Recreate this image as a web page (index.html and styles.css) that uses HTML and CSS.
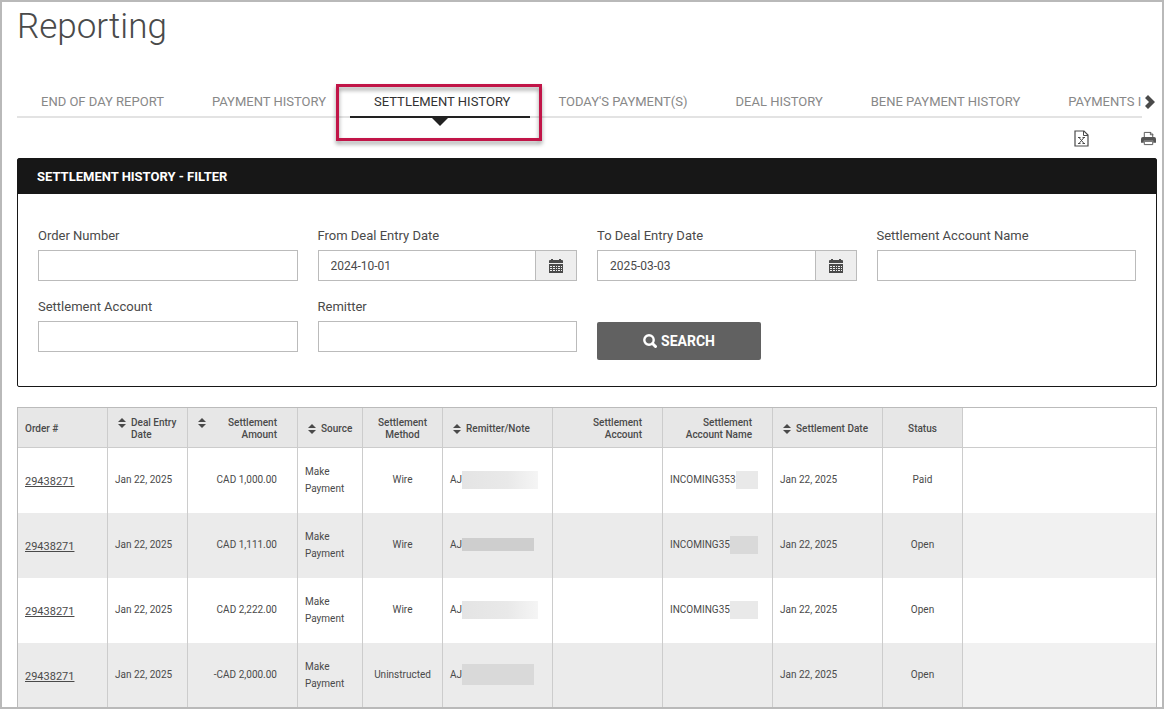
FILE: index.html
```html
<!DOCTYPE html>
<html lang="en">
<head>
<meta charset="UTF-8" />
<meta name="viewport" content="width=device-width, initial-scale=1" />
<title>Reporting - Settlement History</title>
<link rel="stylesheet" href="styles.css">
</head>
<body>

<!-- Shared icons -->
<svg class="sprite" aria-hidden="true">
  <symbol id="icon-sort" viewBox="0 0 8 10">
    <path d="M0 4 4 0l4 4zM0 6h8l-4 4z" />
  </symbol>
  <symbol id="icon-calendar" viewBox="0 0 14 14">
    <path fill-rule="evenodd" d="M0 4V2q0-1 1-1h1V0h2v1h6V0h2v1h1q1 0 1 1v2zM0 5h14v9H0zM1 7v1h2V7zM4 7v1h2V7zM7 7v1h1V7zM9 7v1h2V7zM12 7v1h1V7zM1 9v1h2V9zM4 9v1h2V9zM7 9v1h1V9zM9 9v1h2V9zM12 9v1h1V9zM1 11v1h2v-1zM4 11v1h2v-1zM7 11v1h1v-1zM9 11v1h2v-1zM12 11v1h1v-1z" />
  </symbol>
</svg>

<div class="page">
  <h1>Reporting</h1>

  <div class="tabs">
    <nav class="tab-list">
      <a href="#end-of-day">END OF DAY REPORT</a>
      <a href="#payment">PAYMENT HISTORY</a>
      <a href="#settlement" class="active" aria-current="page">SETTLEMENT HISTORY</a>
      <a href="#today">TODAY'S PAYMENT(S)</a>
      <a href="#deal">DEAL HISTORY</a>
      <a href="#bene">BENE PAYMENT HISTORY</a>
      <a href="#payments-in">PAYMENTS I</a>
    </nav>
    <button type="button" class="tab-next" aria-label="More reports">
      <svg width="10" height="14" viewBox="0 0 10 14"><path d="M0 3 3 0l7 7-7 7-3-3 4-4z" /></svg>
    </button>
  </div>

  <div class="toolbar">
    <button type="button" aria-label="Export to Excel">
      <svg class="outline" width="15" height="17" viewBox="0 0 15 17">
        <path d="M1 1h9l4 4v11H1z" stroke-width="1.2" />
        <path d="M9.5 1v4.500H14" />
        <path d="M5 7.500 10 13.500M10 7.500 5 13.500M4 7.500h2.500M8.500 7.500H11M4 13.500h2.500M8.500 13.500H11" />
      </svg>
    </button>
    <button type="button" aria-label="Print">
      <svg width="15" height="15" viewBox="0 0 16 15">
        <path d="M3.500 8V1h7l2 2v5" fill="#fff" stroke="#555" />
        <path d="M10 1v2.500h3" fill="none" stroke="#555" />
        <path d="M2 6h12q2 0 2 2v4h-3v-2H3v2H0V8q0-2 2-2z" fill="#555" />
        <path d="M3.500 10.500h9v3.500h-9z" fill="#fff" stroke="#555" />
      </svg>
    </button>
  </div>

  <form class="filter">
    <h2>SETTLEMENT HISTORY - FILTER</h2>
    <div class="fields">
      <div class="field">
        <label for="orderNumber">Order Number</label>
        <input id="orderNumber" type="text" />
      </div>
      <div class="field">
        <label for="fromDate">From Deal Entry Date</label>
        <div class="date-group">
          <input id="fromDate" type="text" value="2024-10-01" />
          <button type="button" aria-label="Pick from date"><svg width="14" height="14"><use href="#icon-calendar" /></svg></button>
        </div>
      </div>
      <div class="field">
        <label for="toDate">To Deal Entry Date</label>
        <div class="date-group">
          <input id="toDate" type="text" value="2025-03-03" />
          <button type="button" aria-label="Pick to date"><svg width="14" height="14"><use href="#icon-calendar" /></svg></button>
        </div>
      </div>
      <div class="field">
        <label for="accountName">Settlement Account Name</label>
        <input id="accountName" type="text" />
      </div>
      <div class="field">
        <label for="account">Settlement Account</label>
        <input id="account" type="text" />
      </div>
      <div class="field">
        <label for="remitter">Remitter</label>
        <input id="remitter" type="text" />
      </div>
      <button type="submit" class="search">
        <svg class="outline" width="14" height="14" viewBox="0 0 14 14">
          <circle cx="6" cy="6" r="4.700" stroke-width="2.400" />
          <path d="m9.500 9.500 3 3" stroke-width="3" stroke-linecap="round" />
        </svg>
        SEARCH
      </button>
    </div>
  </form>

  <table class="results">
    <colgroup>
      <col class="w90"><col class="w80"><col class="w110"><col class="w65"><col class="w80">
      <col class="w110"><col class="w110"><col class="w110"><col class="w110"><col class="w80"><col>
    </colgroup>
    <thead>
      <tr>
        <th>Order #</th>
        <th><button type="button" class="sort"><svg><use href="#icon-sort" /></svg><span>Deal Entry Date</span></button></th>
        <th class="right"><button type="button" class="sort"><svg><use href="#icon-sort" /></svg><span>Settlement Amount</span></button></th>
        <th><button type="button" class="sort"><svg><use href="#icon-sort" /></svg><span>Source</span></button></th>
        <th class="center">Settlement Method</th>
        <th><button type="button" class="sort"><svg><use href="#icon-sort" /></svg><span>Remitter/Note</span></button></th>
        <th class="right">Settlement<br>Account</th>
        <th class="right">Settlement<br>Account Name</th>
        <th><button type="button" class="sort"><svg><use href="#icon-sort" /></svg><span>Settlement Date</span></button></th>
        <th class="center">Status</th>
        <td class="filler"></td>
      </tr>
    </thead>
    <tbody>
      <tr>
        <td><a href="#order">29438271</a></td>
        <td>Jan 22, 2025</td>
        <td class="right">CAD 1,000.00</td>
        <td>Make Payment</td>
        <td class="center">Wire</td>
        <td><div class="masked note"><span>AJ</span><i class="mask fade"></i></div></td>
        <td></td>
        <td><div class="masked"><span>INCOMING353</span><i class="mask light short"></i></div></td>
        <td>Jan 22, 2025</td>
        <td class="center">Paid</td>
        <td class="filler"></td>
      </tr>
      <tr>
        <td><a href="#order">29438271</a></td>
        <td>Jan 22, 2025</td>
        <td class="right">CAD 1,111.00</td>
        <td>Make Payment</td>
        <td class="center">Wire</td>
        <td><div class="masked note"><span>AJ</span><i class="mask thin"></i></div></td>
        <td></td>
        <td><div class="masked"><span>INCOMING35</span><i class="mask long"></i></div></td>
        <td>Jan 22, 2025</td>
        <td class="center">Open</td>
        <td class="filler"></td>
      </tr>
      <tr>
        <td><a href="#order">29438271</a></td>
        <td>Jan 22, 2025</td>
        <td class="right">CAD 2,222.00</td>
        <td>Make Payment</td>
        <td class="center">Wire</td>
        <td><div class="masked note"><span>AJ</span><i class="mask fade"></i></div></td>
        <td></td>
        <td><div class="masked"><span>INCOMING35</span><i class="mask light long"></i></div></td>
        <td>Jan 22, 2025</td>
        <td class="center">Open</td>
        <td class="filler"></td>
      </tr>
      <tr>
        <td><a href="#order">29438271</a></td>
        <td>Jan 22, 2025</td>
        <td class="right">-CAD 2,000.00</td>
        <td>Make Payment</td>
        <td class="center">Uninstructed</td>
        <td><div class="masked note"><span>AJ</span><i class="mask tall"></i></div></td>
        <td></td>
        <td></td>
        <td>Jan 22, 2025</td>
        <td class="center">Open</td>
        <td class="filler"></td>
      </tr>
    </tbody>
  </table>
</div>

</body>
</html>
```
FILE: styles.css
```css
* {
  box-sizing: border-box;
}
body {
  font-family: Roboto, "Open Sans", sans-serif;
  background: #fff;
  color: #4a4a4a;
  margin: 0;
}
button, input {
  font-family: inherit;
  color: inherit;
}
button {
  padding: 0;
  border: none;
  background: none;
  cursor: pointer;
}
svg {
  display: block;
  fill: currentColor;
}
.outline {
  fill: none;
  stroke: currentColor;
}
.sprite {
  display: none;
}
.page {
  height: 100vh;
  overflow: hidden;
  border: 2px solid #b9b9b9;
  padding: 0 5px 0 15px;
}
h1 {
  margin: 0;
  font-size: 35px;
  line-height: 50px;
  font-weight: 300;
}

/* Tabs */
.tabs {
  display: flex;
  align-items: center;
  gap: 3px;
  margin-top: 34px;
}
.tab-list {
  flex: 1;
  min-width: 0;
  display: flex;
  gap: 4px;
  overflow-x: clip;
  box-shadow: inset 0 -2px #e3e3e3;
}
.tab-list a {
  position: relative;
  padding: 0 20px 0 24px;
  font-size: 13px;
  line-height: 32px;
  color: #888;
  text-decoration: none;
  white-space: nowrap;
}
.tab-list a:last-child {
  padding-right: 0;
}
.tab-list .active {
  color: #333;
  box-shadow: inset 0 -2px #222;
}
.tab-list .active::after {
  content: "";
  position: absolute;
  top: 100%;
  left: 50%;
  margin-left: -8px;
  border: 8px solid transparent;
  border-top-color: #222;
  border-bottom: none;
}
/* Highlight box round the current tab */
.tab-list .active::before {
  content: "";
  position: absolute;
  inset: -2px -12px -23px -14px;
  border: 3px solid #c11548;
  filter: drop-shadow(0 3px 2px rgba(0,0,0,0.4));
}
.tab-next {
  width: 12px;
}
.toolbar {
  display: flex;
  justify-content: flex-end;
  align-items: center;
  gap: 52px;
  height: 40px;
  padding-right: 1px;
}

/* Filter panel */
.filter {
  border: 1px solid #171717;
  border-radius: 2px;
}
.filter h2 {
  margin: 0;
  padding: 0 19px;
  background: #171717;
  color: #fff;
  font-size: 13px;
  line-height: 35px;
  font-weight: 700;
}
.fields {
  display: grid;
  grid-template-columns: repeat(4, 1fr);
  gap: 15px 20px;
  padding: 32px 20px 26px;
}
.field label {
  display: block;
  margin-bottom: 4px;
  font-size: 13px;
  line-height: 20px;
}
.field input {
  display: block;
  width: 100%;
  height: 31px;
  padding: 0 12px;
  border: 1px solid #bbb;
  font-size: 12px;
}
.fields .field {
  min-height: 56px;
}
.date-group {
  display: flex;
}
.date-group button {
  display: grid;
  place-items: center;
  flex: 0 0 41px;
  border: 1px solid #bbb;
  border-left: none;
  background: #eee;
}
.search {
  display: flex;
  align-items: center;
  justify-content: center;
  gap: 4px;
  width: 164px;
  height: 38px;
  margin-top: 25px;
  border-radius: 2px;
  background: #616161;
  color: #fff;
  font-size: 14px;
  font-weight: 700;
}

/* Results */
.results {
  table-layout: fixed;
  width: 100%;
  margin-top: 20px;
  border: 1px solid #bbb;
  border-collapse: separate;
  border-spacing: 0;
  font-size: 10px;
  line-height: 17px;
}
.w65 { width: 65px; }
.w80 { width: 80px; }
.w90 { width: 90px; }
.w110 { width: 110px; }
.results th, .results td {
  padding: 0 7px;
  border-right: 1px solid #ccc;
  text-align: left;
}
.results thead th, .results thead td {
  height: 40px;
  border-bottom: 1px solid #ccc;
  padding-top: 2px;
  line-height: 12px;
  font-weight: 500;
}
.results th {
  background: #e7e7e7;
}
.results tbody td {
  height: 65px;
  padding-bottom: 2px;
}
.results tbody td:first-child {
  padding-top: 2px;
  padding-bottom: 0;
}
.results tbody tr:nth-child(even) {
  background: #ebebeb;
}
.results .filler {
  border-right: none;
}
.results tbody tr:nth-child(even) .filler {
  background: #f1f1f1;
}
.results .right {
  text-align: right;
  padding-right: 20px;
}
.results .center {
  text-align: center;
}
.results td a {
  color: inherit;
  font-size: 11px;
}
.sort {
  display: flex;
  gap: 5px;
  width: 100%;
  padding-left: 3px;
  font: inherit;
  text-align: inherit;
}
.sort svg {
  flex: none;
  width: 8px;
  height: 10px;
  margin-top: 1px;
}
.sort span {
  flex: 1;
}
.masked {
  display: flex;
  align-items: center;
  justify-content: space-between;
  padding-right: 7px;
}
.note {
  justify-content: flex-start;
}
.mask {
  width: 72px;
  height: 18px;
  background: #d9d9d9;
}
.light { background: #e9e9e9; }
.short { width: 22px; }
.long { width: 29px; }
.fade {
  width: 78px;
  background: linear-gradient(90deg, #e4e4e4, #e9e9e9 60%, #f5f5f5);
}
.thin {
  height: 13px;
  background: #cecece;
}
.tall { height: 21px; }
```
